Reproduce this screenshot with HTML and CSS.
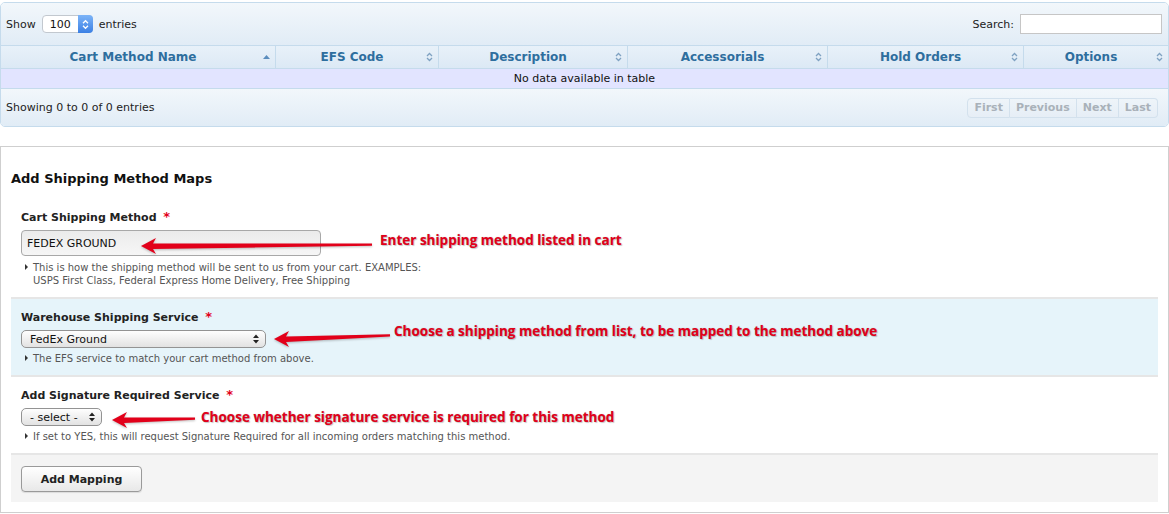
FILE: index.html
```html
<!DOCTYPE html>
<html lang="en">
<head>
    <meta charset="UTF-8">
    <meta name="viewport" content="width=device-width, initial-scale=1.0">
    <title>Shipping Method Maps</title>
    <link rel="stylesheet" href="styles.css">
</head>
<body>
    <!-- Existing maps table -->
    <div class="dt-wrapper">
        <div class="dt-toolbar">
            <div class="dt-length">
                Show
                <span class="len-select">
                    <select>
                        <option>10</option>
                        <option>25</option>
                        <option selected>100</option>
                    </select>
                    <span class="stepper">
                        <svg width="7" height="11" viewBox="0 0 7 11"><polyline points="1,4.2 3.5,1.7 6,4.2" fill="none" stroke="#fff" stroke-width="1.3"/><polyline points="1,6.8 3.5,9.3 6,6.8" fill="none" stroke="#fff" stroke-width="1.3"/></svg>
                    </span>
                </span>
                entries
            </div>
            <div class="dt-filter">
                Search: <input type="text" class="search-input">
            </div>
        </div>

        <table class="dt-table">
            <colgroup>
                <col class="col-name">
                <col class="col-code">
                <col class="col-desc">
                <col class="col-acc">
                <col class="col-hold">
                <col class="col-opt">
            </colgroup>
            <thead>
                <tr>
                    <th><div class="th-inner"><span class="th-label">Cart Method Name</span><svg class="sort-icon" width="7" height="10" viewBox="0 0 7 10"><polygon points="0,7 3.5,3 7,7" fill="#5b8dbd"/></svg></div></th>
                    <th><div class="th-inner"><span class="th-label">EFS Code</span><svg class="sort-icon" width="7" height="10" viewBox="0 0 7 10"><polyline points="1,4 3.5,1.5 6,4" fill="none" stroke="#7fa2c2" stroke-width="1.3"/><polyline points="1,6 3.5,8.5 6,6" fill="none" stroke="#7fa2c2" stroke-width="1.3"/></svg></div></th>
                    <th><div class="th-inner"><span class="th-label">Description</span><svg class="sort-icon" width="7" height="10" viewBox="0 0 7 10"><polyline points="1,4 3.5,1.5 6,4" fill="none" stroke="#7fa2c2" stroke-width="1.3"/><polyline points="1,6 3.5,8.5 6,6" fill="none" stroke="#7fa2c2" stroke-width="1.3"/></svg></div></th>
                    <th><div class="th-inner"><span class="th-label">Accessorials</span><svg class="sort-icon" width="7" height="10" viewBox="0 0 7 10"><polyline points="1,4 3.5,1.5 6,4" fill="none" stroke="#7fa2c2" stroke-width="1.3"/><polyline points="1,6 3.5,8.5 6,6" fill="none" stroke="#7fa2c2" stroke-width="1.3"/></svg></div></th>
                    <th><div class="th-inner"><span class="th-label">Hold Orders</span><svg class="sort-icon" width="7" height="10" viewBox="0 0 7 10"><polyline points="1,4 3.5,1.5 6,4" fill="none" stroke="#7fa2c2" stroke-width="1.3"/><polyline points="1,6 3.5,8.5 6,6" fill="none" stroke="#7fa2c2" stroke-width="1.3"/></svg></div></th>
                    <th><div class="th-inner"><span class="th-label">Options</span><svg class="sort-icon" width="7" height="10" viewBox="0 0 7 10"><polyline points="1,4 3.5,1.5 6,4" fill="none" stroke="#7fa2c2" stroke-width="1.3"/><polyline points="1,6 3.5,8.5 6,6" fill="none" stroke="#7fa2c2" stroke-width="1.3"/></svg></div></th>
                </tr>
            </thead>
            <tbody>
                <tr>
                    <td colspan="6" class="empty-row">No data available in table</td>
                </tr>
            </tbody>
        </table>

        <div class="dt-toolbar dt-footer">
            <div class="dt-info">Showing 0 to 0 of 0 entries</div>
            <div class="dt-paginate">
                <span class="pg-btn">First</span>
                <span class="pg-btn">Previous</span>
                <span class="pg-btn">Next</span>
                <span class="pg-btn">Last</span>
            </div>
        </div>
    </div>

    <!-- Add mapping form -->
    <div class="form-panel">
        <h3 class="form-title">Add Shipping Method Maps</h3>

        <div class="field-row">
            <label class="field-label">Cart Shipping Method <span class="req">*</span></label>
            <input type="text" class="text-input" value="FEDEX GROUND">
            <div class="hint">This is how the shipping method will be sent to us from your cart. EXAMPLES:<br>USPS First Class, Federal Express Home Delivery, Free Shipping</div>

            <svg class="callout-arrow arrow-1" width="231" height="20" viewBox="0 0 231 20"><path d="M0 10 L15 2 L12 7.5 L231 7.4 L231 9.8 L12 13 L15 18 Z"/></svg>
            <span class="callout-text text-1">Enter shipping method listed in cart</span>
        </div>

        <div class="field-row alt">
            <label class="field-label">Warehouse Shipping Service <span class="req">*</span></label>
            <span class="mac-select wide">
                <select>
                    <option>FedEx Ground</option>
                    <option>FedEx Home Delivery</option>
                    <option>FedEx 2Day</option>
                </select>
                <svg class="mac-arrows" width="6" height="10" viewBox="0 0 6 10"><polygon points="0,4 3,0.5 6,4" fill="#222"/><polygon points="0,6 3,9.5 6,6" fill="#222"/></svg>
            </span>
            <div class="hint">The EFS service to match your cart method from above.</div>

            <svg class="callout-arrow arrow-2" width="116" height="20" viewBox="0 0 116 20"><path d="M0 10 L15 2 L12 7.5 L116 5.3 L116 7.5 L12 13 L15 18 Z"/></svg>
            <span class="callout-text text-2">Choose a shipping method from list, to be mapped to the method above</span>
        </div>

        <div class="field-row">
            <label class="field-label">Add Signature Required Service <span class="req">*</span></label>
            <span class="mac-select narrow">
                <select>
                    <option>- select -</option>
                    <option>YES</option>
                    <option>NO</option>
                </select>
                <svg class="mac-arrows" width="6" height="10" viewBox="0 0 6 10"><polygon points="0,4 3,0.5 6,4" fill="#222"/><polygon points="0,6 3,9.5 6,6" fill="#222"/></svg>
            </span>
            <div class="hint">If set to YES, this will request Signature Required for all incoming orders matching this method.</div>

            <svg class="callout-arrow arrow-3" width="83" height="20" viewBox="0 0 83 20"><path d="M0 10 L15 2 L12 7.5 L83 7.4 L83 9.7 L12 13 L15 18 Z"/></svg>
            <span class="callout-text text-3">Choose whether signature service is required for this method</span>
        </div>

        <div class="field-row actions">
            <button type="button" class="btn">Add Mapping</button>
        </div>
    </div>
</body>
</html>
```

FILE: styles.css
```css
* {
    box-sizing: border-box;
}
body {
    margin: 0;
    font-family: "DejaVu Sans", Verdana, sans-serif;
    font-size: 11px;
    color: #222;
    background-color: #fff;
}

/* table wrapper */
.dt-wrapper {
    margin-top: 2px;
    border: 1px solid #c5dbec;
    border-radius: 5px;
    overflow: hidden;
}
.dt-toolbar {
    display: flex;
    align-items: center;
    justify-content: space-between;
    height: 42px;
    padding: 0 6px 0 5px;
    background: linear-gradient(#f2f7fb, #e1ecf6);
}
.dt-footer {
    height: 37px;
    padding-right: 10px;
}
.dt-length {
    display: flex;
    align-items: center;
    gap: 6px;
}
.len-select {
    position: relative;
    display: block;
}
.len-select select {
    display: block;
    width: 51px;
    height: 18px;
    padding: 0 0 0 7px;
    border: 1px solid #c2c8cf;
    border-radius: 4px;
    background: #fff;
    font-family: "DejaVu Sans", Verdana, sans-serif;
    font-size: 11px;
    color: #111;
    appearance: none;
    -webkit-appearance: none;
}
.stepper {
    position: absolute;
    top: 0;
    right: 0;
    width: 15px;
    height: 18px;
    border-radius: 0 4px 4px 0;
    background: linear-gradient(#7cb4f8, #3b80e4);
    display: flex;
    align-items: center;
    justify-content: center;
}
.dt-filter {
    display: flex;
    align-items: center;
}
.search-input {
    width: 142px;
    height: 20px;
    margin-left: 6px;
    border: 1px solid #c6c6c6;
    background: #fff;
}

.dt-table {
    width: 100%;
    border-collapse: separate;
    border-spacing: 0;
    table-layout: fixed;
}
.col-name { width: 274px; }
.col-code { width: 163px; }
.col-desc { width: 189px; }
.col-acc { width: 200px; }
.col-hold { width: 196px; }
.col-opt { width: 145px; }

.dt-table th {
    padding: 0;
    border-top: 1px solid #c5dbec;
    border-bottom: 1px solid #c5dbec;
    border-left: 1px solid #c5dbec;
    background: linear-gradient(#e8f1f9, #dce9f5);
    color: #2e6e9e;
    font-size: 12px;
    font-weight: bold;
}
.dt-table th:first-child {
    border-left: none;
}
.th-inner {
    display: flex;
    align-items: center;
    height: 22px;
    padding: 0 5px 0 2px;
}
.th-label {
    flex: 1;
    text-align: center;
}
.sort-icon {
    flex: none;
}
.empty-row {
    height: 20px;
    padding: 0;
    border-bottom: 1px solid #c5dbec;
    background-color: #e2e4ff;
    text-align: center;
    color: #111;
}

.dt-paginate {
    display: flex;
}
.pg-btn {
    height: 20px;
    line-height: 18px;
    padding: 0 6px;
    border: 1px solid #d3e1ed;
    border-left: none;
    background: linear-gradient(#eef4f9, #e6eef6);
    color: #a9b1b9;
    font-weight: bold;
}
.pg-btn:first-child {
    border-left: 1px solid #d3e1ed;
    border-radius: 4px 0 0 4px;
}
.pg-btn:last-child {
    border-radius: 0 4px 4px 0;
}

/* form panel */
.form-panel {
    margin-top: 19px;
    border: 1px solid #cfcfcf;
    padding: 0 10px 10px;
}
.form-title {
    margin: 0;
    padding: 24px 0 12px;
    font-size: 13px;
    line-height: 16px;
    font-weight: bold;
    color: #111;
}
.field-row {
    position: relative;
    padding: 11px 10px 10px;
    border-bottom: 2px solid #e6e6e6;
}
.field-row.alt {
    background-color: #e6f4fa;
}
.field-row.actions {
    border-bottom: none;
    background-color: #f4f4f4;
}
.field-label {
    display: block;
    margin-bottom: 5px;
    line-height: 14px;
    font-weight: bold;
    color: #222;
}
.req {
    margin-left: 3px;
    color: #e2001a;
    font-size: 13px;
}
.text-input {
    display: block;
    width: 300px;
    height: 26px;
    padding: 0 5px;
    border: 1px solid #a8a8a8;
    border-radius: 4px;
    background: linear-gradient(#ebebeb, #f6f6f6);
    font-family: "DejaVu Sans", Verdana, sans-serif;
    font-size: 11px;
    color: #111;
}
.mac-select {
    position: relative;
    display: block;
    width: fit-content;
}
.mac-select select {
    display: block;
    height: 18px;
    padding: 0 0 0 8px;
    border: 1px solid #939393;
    border-radius: 5px;
    background: linear-gradient(#fefefe, #e2e2e2);
    font-family: "DejaVu Sans", Verdana, sans-serif;
    font-size: 11px;
    color: #111;
    appearance: none;
    -webkit-appearance: none;
}
.mac-select.wide select { width: 245px; }
.mac-select.narrow select { width: 81px; }
.mac-arrows {
    position: absolute;
    top: 4px;
    right: 7px;
}
.hint {
    display: flex;
    margin-top: 4px;
    font-size: 10px;
    line-height: 13px;
    color: #555;
}
.field-row:nth-child(2) .hint {
    margin-top: 5px;
}
.hint::before {
    content: "";
    flex: none;
    width: 0;
    height: 0;
    margin: 3px 5px 0 4px;
    border-left: 3px solid #333;
    border-top: 3px solid transparent;
    border-bottom: 3px solid transparent;
}
.btn {
    display: block;
    width: 121px;
    height: 26px;
    border: 1px solid #9a9a9a;
    border-radius: 4px;
    background: linear-gradient(#ffffff, #e8e8e8);
    box-shadow: 0 1px 1px rgba(0, 0, 0, 0.1);
    font-family: "DejaVu Sans", Verdana, sans-serif;
    font-size: 11px;
    font-weight: bold;
    color: #222;
}

/* red annotations drawn over the form */
.callout-arrow {
    position: absolute;
    fill: #e2001a;
    filter: drop-shadow(0 1px 1px rgba(0, 0, 0, 0.25));
}
.callout-text {
    position: absolute;
    white-space: nowrap;
    font-family: "Open Sans", sans-serif;
    font-size: 13.5px;
    line-height: 20px;
    font-weight: bold;
    color: #e2001a;
    text-shadow: 0 0 1px rgba(0, 0, 0, 0.3), 1px 1px 1px rgba(0, 0, 0, 0.2);
}
.arrow-1 { left: 130px; top: 37px; }
.text-1 { left: 369px; top: 31px; }
.arrow-2 { left: 263px; top: 30px; }
.text-2 { left: 383px; top: 22px; }
.arrow-3 { left: 101px; top: 33px; }
.text-3 { left: 190px; top: 30px; }
```
